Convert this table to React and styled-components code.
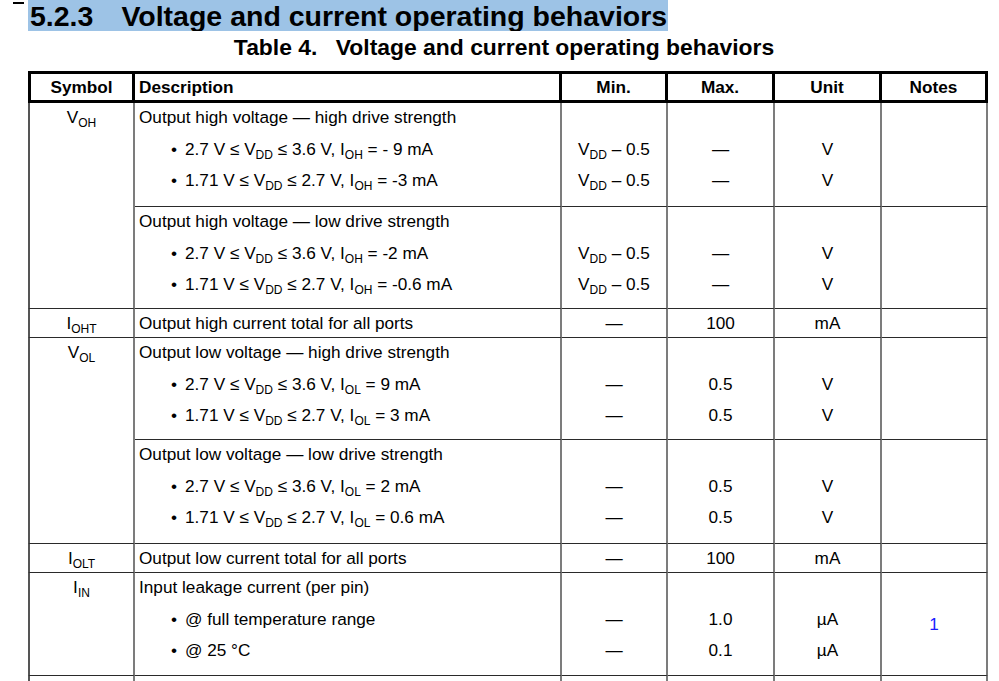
import React from "react";
import styled, { createGlobalStyle } from "styled-components";

const GlobalStyle = createGlobalStyle`
  html, body {
    margin: 0;
    padding: 0;
    background: #ffffff;
  }
  body {
    font-family: "Liberation Sans", Arial, sans-serif;
    color: #000;
  }
`;

const Page = styled.div`
  width: 999px;
  height: 681px;
  overflow: hidden;
  background: #fff;
`;

const HeadingRow = styled.div`
  display: flex;
  align-items: flex-start;
  height: 31px;
`;

const Mark = styled.div`
  width: 11px;
  height: 2px;
  margin: 2px 4px 0 13px;
  background: #000;
`;

const Heading = styled.h2`
  margin: 0;
  height: 31px;
  width: 640px;
  padding-left: 2px;
  box-sizing: border-box;
  background: #9dc3e6;
  font-size: 28.5px;
  font-weight: bold;
  line-height: 32px;
  white-space: nowrap;
  overflow: hidden;
`;

const Num = styled.span`
  margin-right: 28px;
`;

const Caption = styled.div`
  height: 40px;
  line-height: 33px;
  font-size: 22.9px;
  font-weight: bold;
  text-align: center;
  padding-left: 9px;
  white-space: nowrap;
`;

const CaptionLabel = styled.span`
  margin-right: 12px;
`;

const Table = styled.table`
  margin-left: 28px;
  width: 960px;
  table-layout: fixed;
  border-collapse: separate;
  border-spacing: 0;
  font-size: 17.2px;
`;

const Th = styled.th`
  height: 26px;
  padding: 0;
  font-weight: bold;
  text-align: ${(p) => (p.$left ? "left" : "center")};
  padding-left: ${(p) => (p.$left ? "4px" : "0")};
  border-top: 3px solid #000;
  border-bottom: 3px solid #000;
  border-right: 3px solid #000;
  border-left: ${(p) => (p.$first ? "3px solid #000" : "none")};
  line-height: 26px;
  box-sizing: border-box;
`;

const Td = styled.td`
  padding: 0;
  vertical-align: ${(p) => (p.$middle ? "middle" : "top")};
  text-align: ${(p) => (p.$left ? "left" : "center")};
  padding-left: ${(p) => (p.$left ? "4px" : "0")};
  border-right: 2px solid #7c7c7c;
  border-left: ${(p) => (p.$first ? "2px solid #555" : "none")};
  border-bottom: ${(p) => (p.$noline ? "none" : "1px solid #2a2a2a")};
  line-height: 28px;
  white-space: nowrap;
`;

const Title = styled.div`
  height: 27px;
  line-height: 28px;
`;

const Stack = styled.ul`
  list-style: none;
  margin: 0;
  padding: 4px 0 ${(p) => p.$tail || 8}px ${(p) => (p.$bullets ? "32px" : "0")};
`;

const Line = styled.li`
  height: 31px;
  line-height: 31px;
`;

const Dot = styled.span`
  display: inline-block;
  width: 14px;
`;

const Sub = styled.sub`
  font-size: 12px;
  vertical-align: -4px;
  line-height: 0;
`;

const Note = styled.span`
  color: #1a1aff;
`;

const V = ({ s }) => (
  <>
    V<Sub>{s}</Sub>
  </>
);
const I = ({ s }) => (
  <>
    I<Sub>{s}</Sub>
  </>
);

const Values = ({ items }) => (
  <>
    <Title />
    <Stack>
      {items.map((it, i) => (
        <Line key={i}>{it}</Line>
      ))}
    </Stack>
  </>
);

const Desc = ({ title, items, tail }) => (
  <>
    <Title>{title}</Title>
    <Stack $bullets $tail={tail}>
      {items.map((it, i) => (
        <Line key={i}>
          <Dot>•</Dot>
          {it}
        </Line>
      ))}
    </Stack>
  </>
);

const vddMin = (
  <>
    V<Sub>DD</Sub> – 0.5
  </>
);

const GroupRow = ({ sym, span, title, items, min, max, unit, note, tail }) => (
  <tr>
    {sym && (
      <Td $first rowSpan={span}>
        {sym}
      </Td>
    )}
    <Td $left>
      <Desc title={title} items={items} tail={tail} />
    </Td>
    <Td>
      <Values items={min} />
    </Td>
    <Td>
      <Values items={max} />
    </Td>
    <Td>
      <Values items={unit} />
    </Td>
    <Td $middle>{note}</Td>
  </tr>
);

const SingleRow = ({ sym, desc, min, max, unit }) => (
  <tr>
    <Td $first>{sym}</Td>
    <Td $left>{desc}</Td>
    <Td>{min}</Td>
    <Td>{max}</Td>
    <Td>{unit}</Td>
    <Td />
  </tr>
);

export default function App() {
  return (
    <Page>
      <GlobalStyle />
      <HeadingRow>
        <Mark />
        <Heading>
          <Num>5.2.3</Num>Voltage and current operating behaviors
        </Heading>
      </HeadingRow>
      <Caption>
        <CaptionLabel>Table 4.</CaptionLabel> Voltage and current operating behaviors
      </Caption>
      <Table>
        <colgroup>
          <col style={{ width: 107 }} />
          <col style={{ width: 427 }} />
          <col style={{ width: 106 }} />
          <col style={{ width: 107 }} />
          <col style={{ width: 107 }} />
          <col style={{ width: 106 }} />
        </colgroup>
        <thead>
          <tr>
            <Th $first>Symbol</Th>
            <Th $left>Description</Th>
            <Th>Min.</Th>
            <Th>Max.</Th>
            <Th>Unit</Th>
            <Th>Notes</Th>
          </tr>
        </thead>
        <tbody>
          <GroupRow
            sym={<V s="OH" />}
            span={2}
            tail={10}
            title="Output high voltage — high drive strength"
            items={[
              <>2.7 V ≤ <V s="DD" /> ≤ 3.6 V, <I s="OH" /> = - 9 mA</>,
              <>1.71 V ≤ <V s="DD" /> ≤ 2.7 V, <I s="OH" /> = -3 mA</>,
            ]}
            min={[vddMin, vddMin]}
            max={["—", "—"]}
            unit={["V", "V"]}
          />
          <GroupRow
            tail={8}
            title="Output high voltage — low drive strength"
            items={[
              <>2.7 V ≤ <V s="DD" /> ≤ 3.6 V, <I s="OH" /> = -2 mA</>,
              <>1.71 V ≤ <V s="DD" /> ≤ 2.7 V, <I s="OH" /> = -0.6 mA</>,
            ]}
            min={[vddMin, vddMin]}
            max={["—", "—"]}
            unit={["V", "V"]}
          />
          <SingleRow
            sym={<I s="OHT" />}
            desc="Output high current total for all ports"
            min="—"
            max="100"
            unit="mA"
          />
          <GroupRow
            sym={<V s="OL" />}
            span={2}
            tail={7}
            title="Output low voltage — high drive strength"
            items={[
              <>2.7 V ≤ <V s="DD" /> ≤ 3.6 V, <I s="OL" /> = 9 mA</>,
              <>1.71 V ≤ <V s="DD" /> ≤ 2.7 V, <I s="OL" /> = 3 mA</>,
            ]}
            min={["—", "—"]}
            max={["0.5", "0.5"]}
            unit={["V", "V"]}
          />
          <GroupRow
            tail={10}
            title="Output low voltage — low drive strength"
            items={[
              <>2.7 V ≤ <V s="DD" /> ≤ 3.6 V, <I s="OL" /> = 2 mA</>,
              <>1.71 V ≤ <V s="DD" /> ≤ 2.7 V, <I s="OL" /> = 0.6 mA</>,
            ]}
            min={["—", "—"]}
            max={["0.5", "0.5"]}
            unit={["V", "V"]}
          />
          <SingleRow
            sym={<I s="OLT" />}
            desc="Output low current total for all ports"
            min="—"
            max="100"
            unit="mA"
          />
          <GroupRow
            sym={<I s="IN" />}
            span={1}
            tail={9}
            title="Input leakage current (per pin)"
            items={["@ full temperature range", "@ 25 °C"]}
            min={["—", "—"]}
            max={["1.0", "0.1"]}
            unit={["µA", "µA"]}
            note={<Note>1</Note>}
          />
          <tr>
            <Td $first $noline>&nbsp;</Td>
            <Td $left $noline />
            <Td $noline />
            <Td $noline />
            <Td $noline />
            <Td $noline />
          </tr>
        </tbody>
      </Table>
    </Page>
  );
}
